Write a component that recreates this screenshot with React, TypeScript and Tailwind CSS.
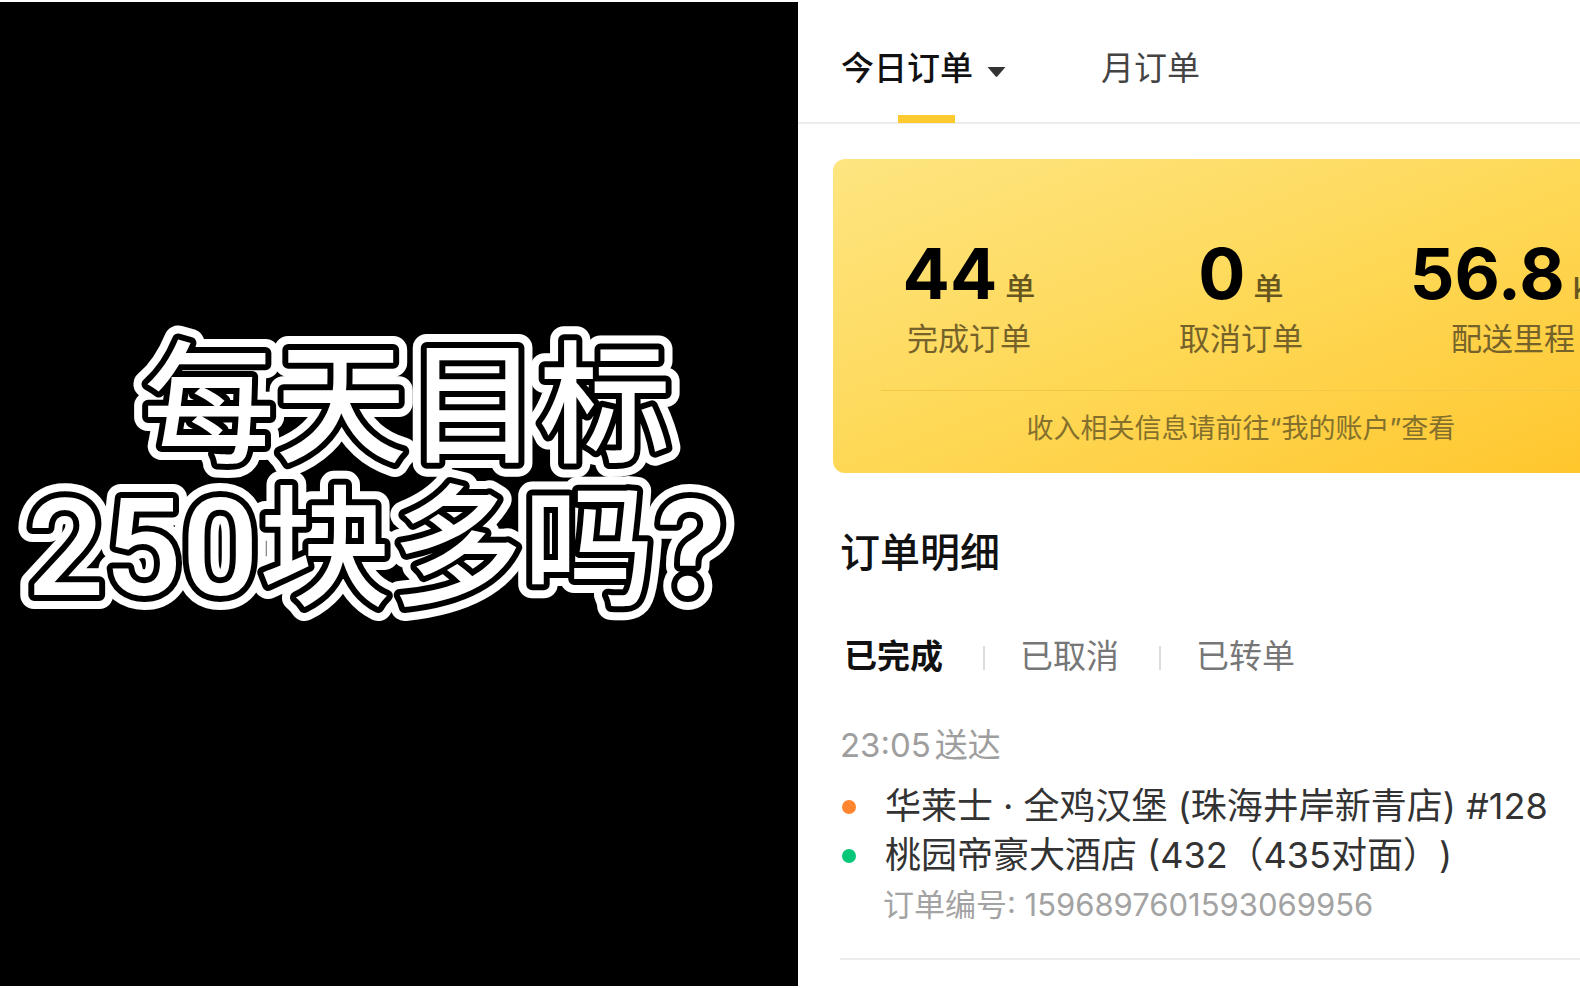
import React, { useState } from 'react';

const stats = [
  { value: '44', unit: '单', label: '完成订单' },
  { value: '0', unit: '单', label: '取消订单' },
  { value: '56.8', unit: 'km', label: '配送里程' },
];

const filters = ['已完成', '已取消', '已转单'];

// White lettering with a black outline and a wider white outline behind it
const CoverTitle = () => (
  <svg
    viewBox="0 0 760 312"
    className="h-[312px] w-[760px] overflow-visible font-medium"
    fill="white"
    strokeLinejoin="round"
    fontSize="132"
  >
    <defs>
      <g id="title">
        <text x="143" y="140">每天目标</text>
        <text x="27" y="283">
          <tspan fontFamily="Roboto" fontSize="136">250</tspan>块多吗
          <tspan fontWeight="600">?</tspan>
        </text>
      </g>
    </defs>
    <use href="#title" stroke="white" strokeWidth="28" />
    <use href="#title" stroke="black" strokeWidth="12" className="[paint-order:stroke_fill]" />
  </svg>
);

const Cover = () => (
  <section className="w-[50.5%] shrink-0 bg-black pt-[310px] overflow-hidden">
    <h1>
      <CoverTitle />
    </h1>
  </section>
);

const Tabs = () => (
  <nav className="flex h-[122px] border-b-2 border-[#ececec] pl-[43px] text-[33px] leading-10">
    <button className="relative flex items-center h-[132px] font-medium text-[#111]">
      今日订单
      <svg className="ml-[14px] mt-2 h-[10px] w-[19px]" viewBox="0 0 19 10" fill="#333">
        <path d="M0.5 0h18L10.5 9.3q-1 1-2 0z" />
      </svg>
      <span className="absolute top-[113px] left-[57px] h-2 w-[57px] bg-[#fdca2f]" />
    </button>
    <button className="ml-[95px] h-[132px] text-[#444]">月订单</button>
  </nav>
);

const SummaryCard = () => (
  <div className="mx-[35px] mt-[35px] w-[816px] rounded-xl bg-linear-to-br from-[#fee580] via-[#fed855] to-[#ffc526] pt-[85px] pb-6">
    <dl className="grid grid-cols-3">
      {stats.map((stat) => (
        <div key={stat.label} className="flex flex-col-reverse items-center">
          <dt className="text-[31px] leading-[42px] text-[#75622a]">{stat.label}</dt>
          <dd className="flex items-baseline text-[30px] leading-[60px] font-medium text-[#66551e]">
            <span className="mr-2 text-[70px] font-bold text-black">{stat.value}</span>
            {stat.unit}
          </dd>
        </div>
      ))}
    </dl>
    <p className="mx-12 mt-[30px] border-t border-[#f3c846] pt-[18px] text-center text-[27px] leading-10 text-[#84702c]">
      收入相关信息请前往“我的账户”查看
    </p>
  </div>
);

const OrderItem = () => (
  <article className="mt-[49px] border-b-2 border-[#ececec] pb-[29px]">
    <p className="flex gap-1 text-[33px] leading-10 text-[#9e9e9e]">
      <span>23:05</span>
      <span>送达</span>
    </p>
    <div className="mt-[17px] text-[36px] leading-[49px] text-[#333]">
      <p className="flex items-center whitespace-nowrap">
        <span className="mr-[29px] ml-[2px] size-[14px] rounded-full bg-[#ff862e]" />
        华莱士 · 全鸡汉堡 (珠海井岸新青店) #128
      </p>
      <p className="flex items-center whitespace-nowrap [text-spacing-trim:space-all]">
        <span className="mr-[29px] ml-[2px] size-[14px] rounded-full bg-[#06c777]" />
        桃园帝豪大酒店 (432（435对面）)
      </p>
    </div>
    <p className="ml-[43px] text-[31px] leading-[49px] text-[#a3a3a3]">订单编号: 1596897601593069956</p>
  </article>
);

const Orders = () => {
  const [filter, setFilter] = useState('已完成');

  return (
    <section className="pl-[42px] mt-[60px]">
      <h2 className="text-[40px] leading-10 font-medium text-[#111]">订单明细</h2>
      <div className="mt-[63px] flex items-center pl-1 text-[33px] leading-10">
        {filters.map((name, i) => (
          <React.Fragment key={name}>
            {i > 0 && <span className="ml-10 mr-[35px] mt-1 h-6 w-[2px] bg-[#dcdcdc]" />}
            <button
              onClick={() => setFilter(name)}
              className={name === filter ? 'font-bold text-[#111]' : 'text-[#777]'}
            >
              {name}
            </button>
          </React.Fragment>
        ))}
      </div>
      <OrderItem />
    </section>
  );
};

const App = () => (
  <main className="flex min-h-screen overflow-hidden bg-white py-[2px] font-['Inter','Noto_Sans_CJK_SC',sans-serif]">
    <Cover />
    <div className="min-w-0 flex-1 overflow-hidden">
      <Tabs />
      <SummaryCard />
      <Orders />
    </div>
  </main>
);

export default App;
